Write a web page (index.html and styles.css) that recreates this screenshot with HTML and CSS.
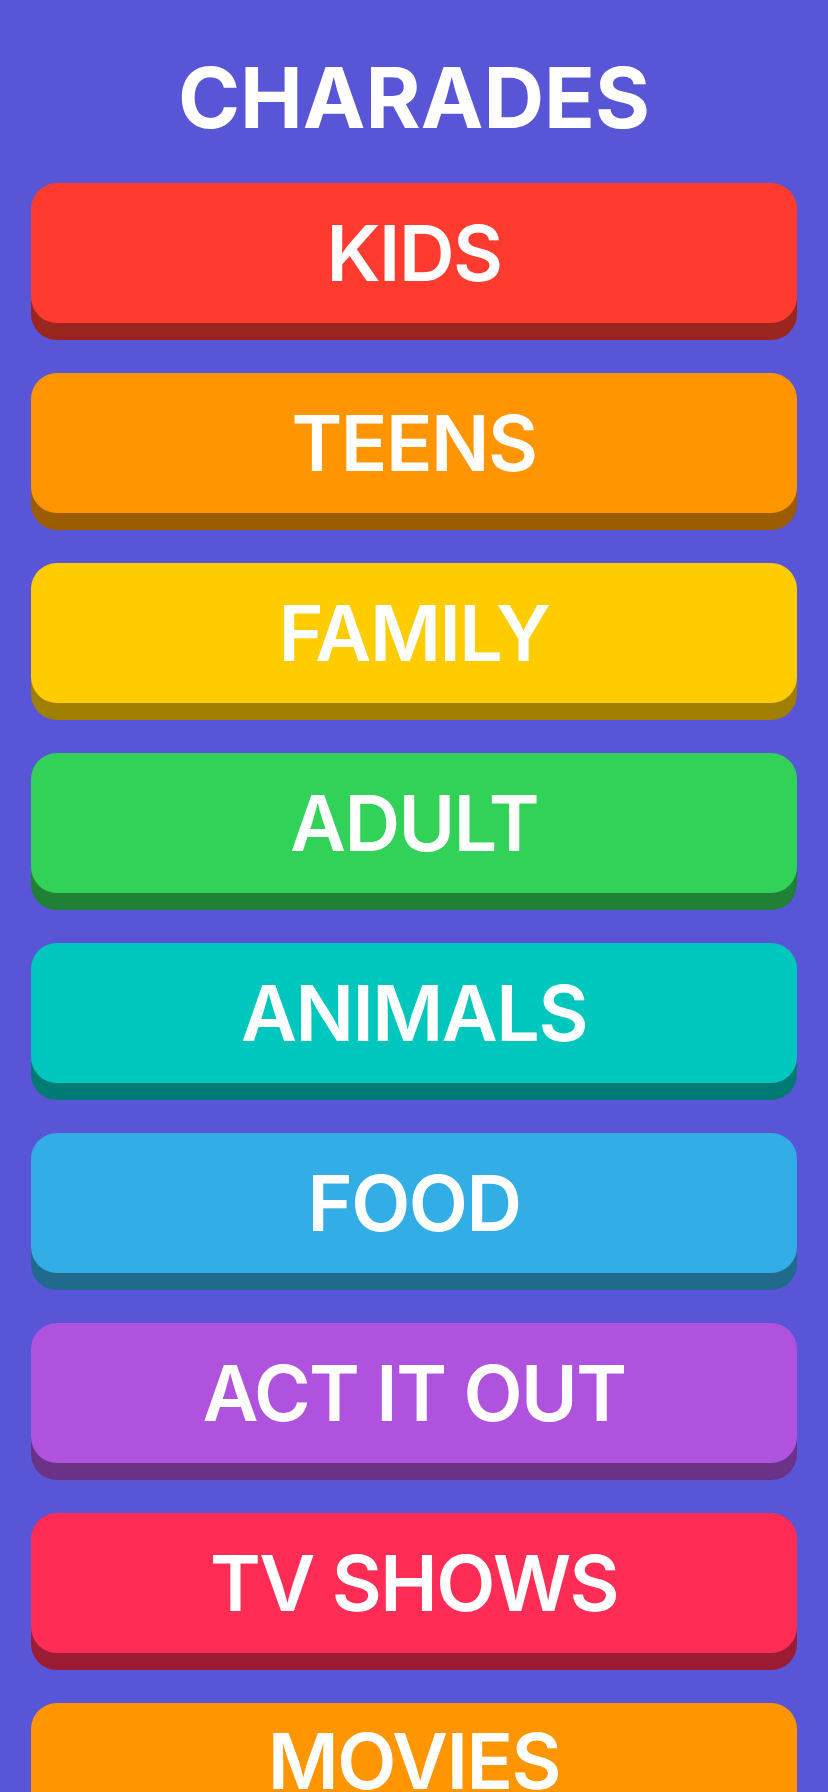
FILE: index.html
```html
<!DOCTYPE html>
<html lang="en">
<head>
<meta charset="utf-8">
<title>Charades</title>
<link rel="stylesheet" href="styles.css">
</head>
<body>
<main class="screen">
  <h1 class="title">CHARADES</h1>
  <nav class="decks">
    <button class="deck red">KIDS</button>
    <button class="deck orange">TEENS</button>
    <button class="deck yellow">FAMILY</button>
    <button class="deck green">ADULT</button>
    <button class="deck teal">ANIMALS</button>
    <button class="deck blue">FOOD</button>
    <button class="deck purple">ACT IT OUT</button>
    <button class="deck pink">TV SHOWS</button>
    <button class="deck orange deck-raised">MOVIES</button>
  </nav>
</main>
</body>
</html>
```

FILE: styles.css
```css
html, body {
  margin: 0;
  padding: 0;
  background: #5856d6;
}

body {
  font-family: Inter, "Noto Sans", "DejaVu Sans", sans-serif;
  color: #ffffff;
  overflow: hidden;
  height: 1792px;
}

.screen {
  display: flex;
  flex-direction: column;
  padding: 56px 31px 0;
}

.title {
  margin: 0 0 43px;
  font-size: 84px;
  line-height: 84px;
  font-weight: 700;
  text-align: center;
  letter-spacing: 0;
}

.decks {
  display: flex;
  flex-direction: column;
  gap: 50px;
}

.deck {
  display: block;
  width: 100%;
  height: 140px;
  border: 0;
  border-radius: 26px;
  padding: 0;
  margin: 0;
  font-family: Inter, "Noto Sans", "DejaVu Sans", sans-serif;
  font-size: 77px;
  line-height: 140px;
  font-weight: 600;
  color: #ffffff;
  text-align: center;
  letter-spacing: -1.5px;
  background: var(--c);
  box-shadow: 0 17px 1px -1px var(--d), 0 17px 0 0 var(--d);
}

.deck-raised {
  line-height: 116px;
  padding-bottom: 24px;
}

.red    { --c: #ff3b30; --d: #9b2620; }
.orange { --c: #ff9500; --d: #9c5c00; }
.yellow { --c: #ffcc00; --d: #a07f00; }
.green  { --c: #32d158; --d: #1f8036; }
.teal   { --c: #00c7be; --d: #007a74; }
.blue   { --c: #32ade6; --d: #1f6a8d; }
.purple { --c: #af52de; --d: #6b3288; }
.pink   { --c: #ff2d55; --d: #9c1c34; }
```
